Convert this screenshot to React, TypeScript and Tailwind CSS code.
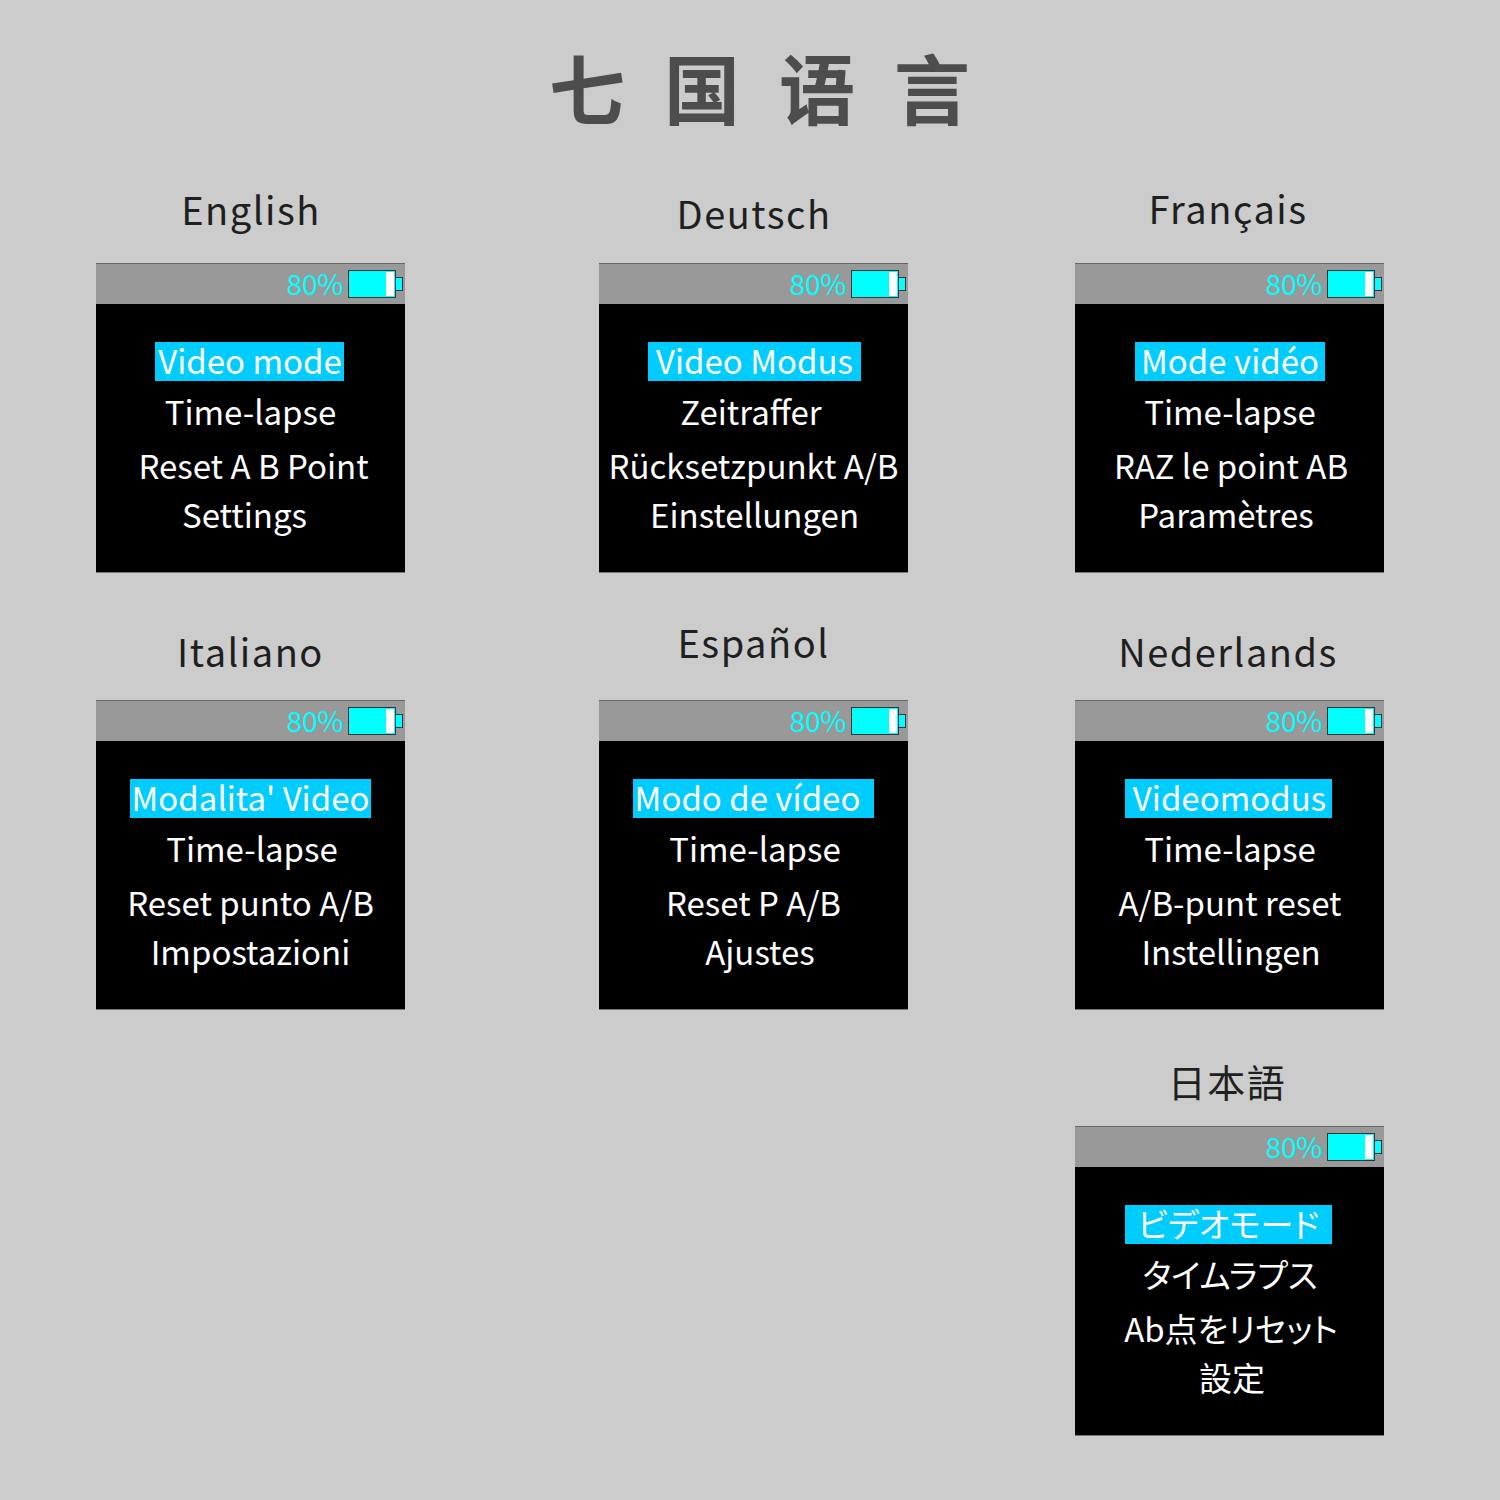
const cjk = "font-['Noto_Sans_CJK_SC','Noto_Sans_CJK_JP',sans-serif]";

type Line = { text: string; nudge: string };

type Screen = {
  label: string;
  labelClass: string;
  cell?: string;
  selected: string;
  selectedClass: string;
  textClass?: string;
  lines: Line[];
};

const topRow: Screen[] = [
  {
    label: "English",
    labelClass: "pb-[28px] pl-[1px]",
    selected: "Video mode",
    selectedClass: "w-[189px] mr-[2px] pl-[1px]",
    lines: [
      { text: "Time-lapse", nudge: "" },
      { text: "Reset A B Point", nudge: "pl-[6px]" },
      { text: "Settings", nudge: "pr-[12px]" },
    ],
  },
  {
    label: "Deutsch",
    labelClass: "pb-[20px] pl-[1px]",
    selected: "Video Modus",
    selectedClass: "w-[213px] ml-[2px]",
    lines: [
      { text: "Zeitraffer", nudge: "pr-[5px]" },
      { text: "Rücksetzpunkt A/B", nudge: "" },
      { text: "Einstellungen", nudge: "pl-[2px]" },
    ],
  },
  {
    label: "Français",
    labelClass: "pb-[30px] pr-[3px]",
    selected: "Mode vidéo",
    selectedClass: "w-[190px] ml-[1px]",
    lines: [
      { text: "Time-lapse", nudge: "pl-[1px]" },
      { text: "RAZ le point AB", nudge: "pl-[3px]" },
      { text: "Paramètres", nudge: "pr-[7px]" },
    ],
  },
];

const middleRow: Screen[] = [
  {
    label: "Italiano",
    labelClass: "pb-[18px]",
    selected: "Modalita' Video",
    selectedClass: "w-[241px]",
    lines: [
      { text: "Time-lapse", nudge: "pl-[3px]" },
      { text: "Reset punto A/B", nudge: "" },
      { text: "Impostazioni", nudge: "" },
    ],
  },
  {
    label: "Español",
    labelClass: "pb-[36px]",
    selected: "Modo de vídeo",
    selectedClass: "w-[241px]",
    textClass: "pr-[12px]",
    lines: [
      { text: "Time-lapse", nudge: "pl-[3px]" },
      { text: "Reset P A/B", nudge: "" },
      { text: "Ajustes", nudge: "pl-[13px]" },
    ],
  },
  {
    label: "Nederlands",
    labelClass: "pb-[18px] pr-[3px]",
    selected: "Videomodus",
    selectedClass: "w-[207px] mr-[2px] pl-[2px]",
    lines: [
      { text: "Time-lapse", nudge: "pl-[1px]" },
      { text: "A/B-punt reset", nudge: "pl-[1px]" },
      { text: "Instellingen", nudge: "pl-[3px]" },
    ],
  },
];

const japanese: Screen = {
  label: "日本語",
  labelClass: "pb-[10px] pr-[5px]",
  cell: "col-start-3",
  selected: "ビデオモード",
  selectedClass: "w-[207px] mr-[2px] [font-feature-settings:'palt']",
  lines: [
    { text: "タイムラプス", nudge: "pl-[1px] [font-feature-settings:'palt']" },
    { text: "Ab点をリセット", nudge: "pl-[3px] [font-feature-settings:'palt']" },
    { text: "設定", nudge: "pl-[5px]" },
  ],
};

function Battery() {
  return (
    <div className="flex items-center">
      <div className="flex h-[28px] w-[48px] justify-end border-[1.5px] border-[#333333] bg-[#00ffff] pr-[1px] pt-[1px] pb-[1px]">
        <div className="w-[8px] bg-white" />
      </div>
      <div className="-ml-px h-[14px] w-[8px] border-[1.5px] border-[#333333] bg-[#00ffff]" />
    </div>
  );
}

function DeviceScreen({ screen }: { screen: Screen }) {
  return (
    <div className={`w-[309px] ${screen.cell ?? ""}`}>
      <div
        className={`flex h-[80px] items-center justify-center whitespace-nowrap text-[38px] leading-none tracking-[1.5px] text-[#1f1f1f] ${screen.labelClass}`}
      >
        {screen.label}
      </div>
      <div className="h-[310px] w-[309px] border-y border-t-[#666666] border-b-[#777777] bg-black">
        <div className="flex h-[40px] items-center justify-end gap-[5px] bg-[#999999] pr-[2px]">
          <span className="pb-[2px] text-[28.5px] leading-none tracking-[-0.5px] text-[#00ffff]">
            80%
          </span>
          <Battery />
        </div>
        <div className="flex flex-col items-center pt-[38px] text-[33px] leading-[37px] text-white">
          <div
            className={`h-[39px] whitespace-nowrap bg-[#00ccff] text-center ${screen.selectedClass} ${screen.textClass ?? ""}`}
          >
            {screen.selected}
          </div>
          <div className={`mt-[12px] h-[39px] whitespace-nowrap ${screen.lines[0].nudge}`}>
            {screen.lines[0].text}
          </div>
          <div className={`mt-[15px] h-[39px] whitespace-nowrap ${screen.lines[1].nudge}`}>
            {screen.lines[1].text}
          </div>
          <div className={`mt-[10px] h-[39px] whitespace-nowrap ${screen.lines[2].nudge}`}>
            {screen.lines[2].text}
          </div>
        </div>
      </div>
    </div>
  );
}

export default function App() {
  return (
    <div className={`h-[1500px] w-[1500px] overflow-hidden bg-[#cccccc] ${cjk}`}>
      <div className="flex h-[183px] items-start justify-center gap-[39px] pl-[19px] pt-[32px] text-[76px] font-bold leading-[108px] text-[#4d4d4d]">
        <span>七</span>
        <span>国</span>
        <span>语</span>
        <span>言</span>
      </div>
      <div className="grid grid-cols-[503px_476px_309px] pl-[96px]">
        {topRow.map((screen) => (
          <DeviceScreen key={screen.label} screen={screen} />
        ))}
      </div>
      <div className="mt-[47px] grid grid-cols-[503px_476px_309px] pl-[96px]">
        {middleRow.map((screen) => (
          <DeviceScreen key={screen.label} screen={screen} />
        ))}
      </div>
      <div className="mt-[36px] grid grid-cols-[503px_476px_309px] pl-[96px]">
        <DeviceScreen screen={japanese} />
      </div>
    </div>
  );
}
